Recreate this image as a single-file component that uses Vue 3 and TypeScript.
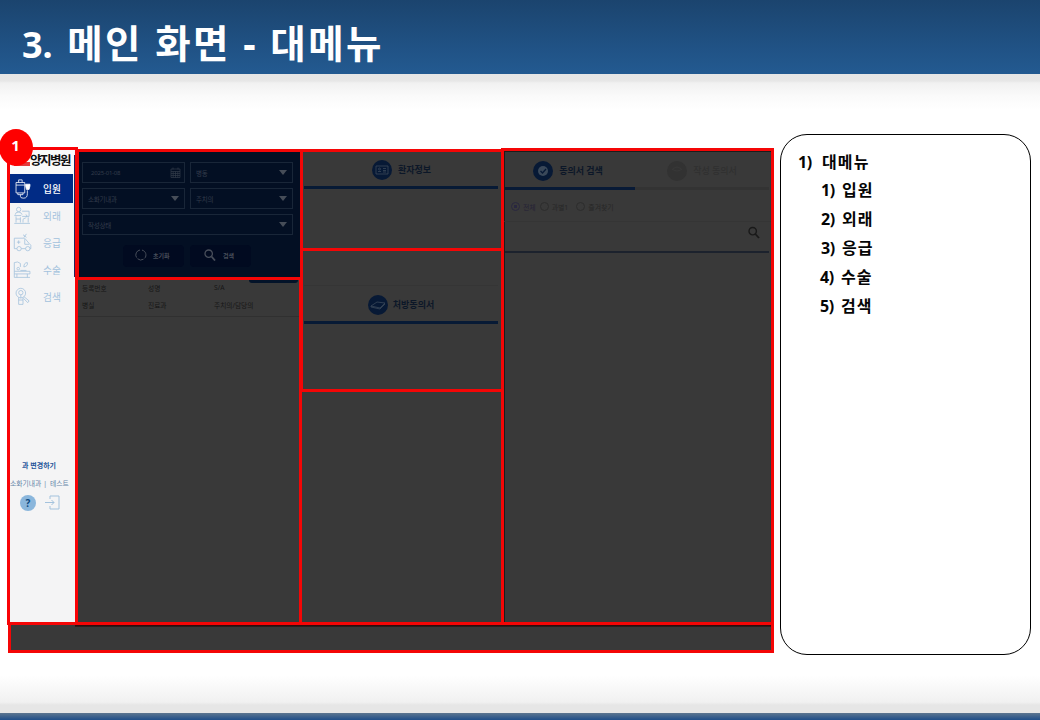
<script setup lang="ts">
interface MenuItem {
  label: string
  icon: string[]
}

const menu: MenuItem[] = [
  {
    label: '입원',
    icon: ['M3 4h10v12H3zM6 4V1h4v3M3 7h10M5 16v2h6v-2M8 18v2q0 2 3 2h1q4 0 4-5v-4', 'M14 6h5v2l-1 4h-3l-1-4z'],
  },
  {
    label: '외래',
    icon: ['M3.500 4a2.500 2.500 0 1 0 5 0a2.500 2.500 0 1 0-5 0M2 10q0-3 4-3q3 0 4 3M1 11h8M3 12v7M17 13v6M3 15h5M8 13v6', 'M10 6h8v6h-8M14 13a1.500 1.500 0 1 0 0-3M11 19v-3q0-2 3-2M1 20h18'],
  },
  {
    label: '응급',
    icon: ['M1 6h12l5 6 2 2v4h-1M1 6v12h3M9 18h5M13 7v6h5', 'M4 18a2.5 2.5 0 1 0 5 0a2.5 2.5 0 1 0-5 0M14 18a2.5 2.5 0 1 0 5 0a2.5 2.5 0 1 0-5 0M4 10.500h4M6 8.500v4M11 2l4 3M15 1l-3 4'],
  },
  {
    label: '수술',
    icon: ['M1 3q4-2 7 1v4M1 3v17M1 13h18v3H1M4 16v4M16 16v4M1 20h18', 'M4 10a1.5 1.5 0 1 0 3 0a1.5 1.5 0 1 0-3 0M8 12h7M12 8q0-5 4-5q1 4-4 5'],
  },
  {
    label: '검색',
    icon: ['M3 7a5.5 5.5 0 1 0 11 0a5.5 5.5 0 1 0-11 0M12 11l6 5-1.500 2-5-5', 'M6 6.500a2.5 2.5 0 1 0 5 0a2.5 2.5 0 1 0-5 0M6 12v8h5v-8M6 15h5M8.500 9v4'],
  },
]

const notes: string[] = ['입원', '외래', '응급', '수술', '검색']
</script>

<template>
  <div class="slide">
    <header class="title"><h1><span>3.</span> 메인 화면 - 대메뉴</h1></header>
    <main class="content">
      <section class="board">
        <span class="badge">1</span>
        <div class="columns">
          <nav class="panel sidebar">
            <div class="logo"><i></i><b>양지병원</b></div>
            <a v-for="(item, i) in menu" :key="item.label" class="item" :class="{ active: i === 0 }">
              <svg viewBox="0 0 22 23"><path v-for="d in item.icon" :key="d" :d="d" /></svg>
              <span>{{ item.label }}</span>
            </a>
            <div class="account">
              <strong>과 변경하기</strong>
              <p><span>소화기내과</span><i>|</i><span>테스트</span></p>
              <div class="tools">
                <span class="help">?</span>
                <svg viewBox="0 0 15 15"><path d="M5 4V1h9v13H5v-3M0 7.5h9M6.5 5L9 7.5 6.5 10" /></svg>
              </div>
            </div>
          </nav>

          <div class="col-a">
            <section class="panel search">
              <div class="fields">
                <div class="field date">
                  <span>2025-01-08</span>
                  <svg class="cal" viewBox="0 0 11 11"><path d="M1 2h9v8.500H1zM1 4.500h9M1 6.500h9M1 8.500h9M3.200 4.500v6M5.500 4.500v6M7.800 4.500v6M3 .5v2M8 .5v2" /></svg>
                </div>
                <div class="field"><span>병동</span><i class="caret"></i></div>
                <div class="field"><span>소화기내과</span><i class="caret"></i></div>
                <div class="field"><span>주치의</span><i class="caret"></i></div>
                <div class="field wide"><span>작성상태</span><i class="caret"></i></div>
              </div>
              <div class="buttons">
                <button>
                  <svg viewBox="0 0 12 12"><path d="M5 1a5 5 0 0 0-3.500 7.500M2.500 9.700a5 5 0 0 0 6 .5M9.700 9.300A5 5 0 0 0 7 1.100" /></svg>초기화
                </button>
                <button>
                  <svg viewBox="0 0 12 12"><path d="M1 4.700a3.700 3.700 0 1 0 7.400 0a3.700 3.700 0 1 0-7.400 0" /><path class="handle" d="M7.500 7.500l3.500 4" /></svg>검색
                </button>
              </div>
            </section>
            <section class="panel list">
              <div class="tab"></div>
              <div class="heads">
                <span>등록번호</span><span>성명</span><span class="sa">S/A</span>
                <span>병실</span><span>진료과</span><span>주치의/담당의</span>
              </div>
            </section>
          </div>

          <div class="col-b">
            <section class="panel info">
              <h2>
                <svg viewBox="0 0 20 20"><circle cx="10" cy="10" r="10" /><path d="M4 6h12v8H4zM6 11.500h3M6.500 9a1 1 0 1 0 2 0a1 1 0 1 0-2 0M11 8.500h3M11 10.500h3M11 12h3" /></svg>환자정보
              </h2>
            </section>
            <section class="panel orders">
              <h2>
                <svg viewBox="0 0 20 20"><circle cx="10" cy="10" r="10" /><path d="M3 11l6-4 8 1-5 5zM3 11v1l9 2 5-5" /></svg>처방동의서
              </h2>
            </section>
            <section class="panel blank"></section>
          </div>

          <section class="panel consent">
            <div class="tabs">
              <h2 class="on">
                <svg viewBox="0 0 20 20"><circle cx="10" cy="10" r="10" /><circle class="ring" cx="10" cy="10" r="5" /><path d="M7.500 10l2 2 3.500-4" /></svg>동의서 검색
              </h2>
              <h2 class="off">
                <svg viewBox="0 0 20 20"><circle cx="10" cy="10" r="10" /><path d="M5 8q5 4 10 0M6 7.500q4-3 8 0" /></svg>작성 동의서
              </h2>
            </div>
            <div class="radios">
              <label class="checked"><i></i>전체</label>
              <label><i></i>과별1</label>
              <label><i></i>즐겨찾기</label>
            </div>
            <div class="query">
              <svg viewBox="0 0 12 12"><path d="M1 4.700a3.700 3.700 0 1 0 7.400 0a3.700 3.700 0 1 0-7.400 0" /><path class="handle" d="M7.300 7.500l3.700 4" /></svg>
            </div>
          </section>
        </div>
        <div class="panel foot"></div>
      </section>

      <aside class="notes">
        <p class="lead"><b>1)</b><span>대메뉴</span></p>
        <ol>
          <li v-for="(note, i) in notes" :key="note"><b>{{ i + 1 }})</b><span>{{ note }}</span></li>
        </ol>
      </aside>
    </main>
    <footer class="base"><div></div></footer>
  </div>
</template>

<style>
body {
  overflow: hidden;
}
</style>

<style scoped>
* {
  box-sizing: border-box;
}
h1, h2, p, ol {
  margin: 0;
  padding: 0;
  list-style: none;
}
i {
  font-style: normal;
}
svg {
  display: block;
  flex: none;
  fill: none;
  stroke: currentColor;
}
.slide {
  width: 1040px;
  height: 720px;
  display: flex;
  flex-direction: column;
  background: #fff;
  font-family: "Noto Sans", "Noto Sans CJK KR", sans-serif;
  white-space: nowrap;
}
.title {
  height: 74px;
  flex: none;
  padding: 14px 0 0 22px;
  background: linear-gradient(#1b446e, #1f4f80 50%, #235a91);
}
h1 {
  color: #fff;
  font-size: 38.5px;
  line-height: 58px;
  font-weight: 700;
  letter-spacing: 2.400px;
}
h1 span {
  margin-right: 2px;
  font-size: 36px;
  letter-spacing: 0;
}
.content {
  height: 601px;
  flex: none;
  display: flex;
  align-items: flex-start;
  background: linear-gradient(#e6e6e6 0, #e7e7e7 7px, #f1f1f1 9px, #fafafa 22px, #fff 36px);
}
.board {
  position: relative;
  width: 767px;
  margin: 73px 0 0 7px;
}
.badge {
  position: absolute;
  z-index: 5;
  left: -8px;
  top: -18px;
  width: 34px;
  height: 37px;
  border-radius: 50%;
  background: #fe0000;
  color: #fff;
  font-size: 15px;
  font-weight: 700;
  line-height: 32px;
  text-align: center;
  padding-right: 1px;
}
.columns {
  display: flex;
  align-items: flex-start;
}
.panel {
  position: relative;
  border: 3px solid #f40606;
  background: #393939;
}
.sidebar {
  z-index: 2;
  width: 71px;
  height: 478px;
  flex: none;
  border-color: #fa0206;
  background: linear-gradient(#23275c, #23275c) right 5px / 1px 122px no-repeat #f4f4f5;
  color: #a3c2dd;
}
.logo {
  width: 64px;
  height: 24px;
  padding-left: 4px;
  display: flex;
  align-items: center;
  background: #fafafa;
  color: #111;
}
.logo i {
  width: 16px;
  height: 4px;
  margin-top: 3px;
  background: #e33a3c;
}
.logo b {
  margin-top: -2px;
  font-size: 12.5px;
  line-height: 18px;
  letter-spacing: -1.5px;
}
.item {
  width: 64px;
  height: 26.900px;
  display: flex;
  align-items: center;
  font-size: 9.700px;
}
.item svg {
  width: 22px;
  height: 20px;
  margin: 0 9px 0 2px;
  stroke-width: 0.9;
}
.item span {
  padding-top: 2px;
  line-height: 16px;
}
.item.active {
  width: 63px;
  height: 29px;
  background: #012b85;
  color: #fff;
  font-weight: 500;
}
.active svg path:last-child {
  fill: #fff;
}
.account {
  margin-top: 150px;
  font-size: 7px;
  line-height: 10px;
}
.account strong {
  display: block;
  padding-left: 12px;
  color: #25559a;
}
.account p {
  display: flex;
  margin-top: 8px;
  gap: 2px;
  color: #6685a8;
  font-size: 6.800px;
}
.account p span:last-child {
  padding-left: 1px;
}
.tools {
  display: flex;
  align-items: center;
  gap: 9px;
  margin: 6px 0 0 10px;
}
.tools svg {
  width: 15px;
  height: 15px;
}
.help {
  width: 16px;
  height: 16px;
  border-radius: 50%;
  background: #8ab6dc;
  color: #0d4880;
  font-size: 10px;
  font-weight: 700;
  line-height: 16px;
  text-align: center;
}
.col-a {
  width: 227px;
  flex: none;
  margin: 2px 0 0 -2px;
}
.search {
  z-index: 3;
  height: 131px;
  padding: 10px 0 0 3px;
  background: #030f23;
  color: #333c4b;
}
.fields {
  display: grid;
  grid-template-columns: 103px 103px;
  gap: 5px;
}
.field {
  height: 21px;
  padding: 0 5px;
  display: flex;
  align-items: center;
  justify-content: space-between;
  border: 1px solid #192638;
  font-size: 6.500px;
  letter-spacing: -0.2px;
}
.date span {
  padding-left: 3px;
  font-size: 6px;
}
.wide {
  grid-column: span 2;
}
.caret {
  border: 4px solid transparent;
  border-top: 5px solid #464d58;
  border-bottom: 0;
}
.cal {
  width: 11px;
  height: 11px;
  margin-right: -2px;
  stroke-width: 0.7;
}
.buttons {
  display: flex;
  gap: 6px;
  margin: 10px 0 0 41px;
}
button {
  width: 61px;
  height: 22px;
  display: flex;
  align-items: center;
  gap: 6px;
  padding: 0 0 2px 12px;
  border: 0;
  border-radius: 4px;
  background: #010a20;
  color: #484e5a;
  font: 700 6px "Noto Sans CJK KR", sans-serif;
}
button svg {
  width: 12px;
  height: 12px;
}
button + button {
  padding-left: 14px;
  gap: 7px;
}
button + button svg {
  stroke-width: 1.300;
}
.handle {
  stroke-width: 1.8;
}
.list {
  z-index: 1;
  width: 227px;
  height: 348px;
  margin: -3px 0 0 -1px;
  overflow: hidden;
}
.tab {
  width: 49px;
  height: 3px;
  margin-left: 171px;
  border-radius: 0 0 12px 12px;
  background: #031329;
}
.heads {
  height: 34px;
  padding-left: 4px;
  display: grid;
  grid-template-columns: 66px 66px 1fr;
  grid-template-rows: 11px 17px;
  align-items: end;
  border-bottom: 1px solid #303030;
  color: #161616;
  font-size: 6.700px;
  line-height: 10px;
}
.sa {
  align-self: start;
}
.col-b {
  width: 204px;
  flex: none;
  margin: 2px 0 0 -3px;
}
.info {
  height: 102px;
}
.info h2,
.orders h2 {
  width: 194px;
  margin-left: 1px;
  border-bottom: 3px solid #071a35;
}
h2 {
  height: 37px;
  padding-top: 2px;
  display: flex;
  align-items: center;
  justify-content: center;
  gap: 6px;
  color: #0c1728;
  font-size: 9px;
  line-height: 14px;
}
h2 svg {
  width: 20px;
  height: 20px;
  color: #3a4859;
  stroke-width: 0.8;
}
h2 svg circle {
  fill: #071935;
  stroke: none;
}
h2 svg .ring {
  fill: #3a4859;
}
h2 .ring + path {
  stroke: #071935;
  stroke-width: 1.3;
}
.info h2 {
  padding-left: 1px;
}
.orders {
  height: 144px;
  margin-top: -3px;
  padding-top: 34px;
}
.orders h2 {
  height: 39px;
  border-top: 1px solid #353535;
  gap: 5px;
}
.blank {
  width: 205px;
  height: 236px;
  margin: -3px 0 0 -1px;
}
.consent {
  z-index: 2;
  width: 273px;
  height: 477px;
  flex: none;
  margin: 1px 0 0 -3px;
  box-shadow: inset 1px 1px #1c1c1c;
}
.tabs {
  display: flex;
  padding-left: 1px;
}
.tabs h2 {
  height: 39px;
  padding-top: 3px;
  border-bottom: 3px solid #081a36;
}
.tabs .on {
  width: 130px;
  padding-right: 4px;
}
.tabs .off {
  width: 134px;
  border-color: #333;
  color: #303030;
  font-weight: 500;
}
.off svg {
  color: #3a3a3a;
}
.off svg circle {
  fill: #323232;
}
.radios {
  display: flex;
  gap: 4px;
  height: 32px;
  padding: 2px 0 0 7px;
  align-items: center;
  border-bottom: 1px solid #353535;
  color: #272727;
  font-size: 6.900px;
}
label {
  display: flex;
  align-items: center;
  gap: 3px;
}
label:last-child {
  margin-left: 4px;
}
label i {
  width: 9px;
  height: 9px;
  border: 1px solid #2c2c2c;
  border-radius: 50%;
}
.checked {
  color: #252136;
}
.checked i {
  border-color: #292740;
  background: radial-gradient(circle, #292740 1.5px, transparent 2px);
}
.query {
  width: 264px;
  height: 31px;
  margin-left: 1px;
  padding: 4px 9px 0 0;
  display: flex;
  justify-content: flex-end;
  border-bottom: 2px solid #1c222d;
  color: #191919;
}
.query svg {
  width: 12px;
  height: 13px;
  stroke-width: 1.400;
}
.foot {
  z-index: 3;
  height: 31px;
  margin: -3px 0 0 1px;
}
.foot::before {
  content: "";
  display: block;
  height: 2px;
  margin-left: 64px;
  background: linear-gradient(#300505, #272727);
}
.notes {
  width: 251px;
  height: 521px;
  margin: 60px 0 0 6px;
  padding: 13px 0 0 17px;
  border: 1px solid #000;
  border-radius: 27px;
  background: #fff;
  color: #050505;
  font-size: 16px;
  font-weight: 700;
  line-height: 29px;
}
.notes p,
.notes li {
  display: flex;
}
.notes ol {
  margin-top: -1px;
}
.notes b {
  width: 21px;
  font-weight: 700;
  letter-spacing: -0.5px;
}
.notes .lead b {
  width: 24px;
}
.notes li {
  padding-left: 23px;
}
.notes li:nth-child(n + 4) {
  padding-left: 22px;
}
.notes span {
  letter-spacing: 1.100px;
}
.base {
  height: 45px;
  flex: none;
  padding-top: 38px;
  background: linear-gradient(#fff, #f1f1f1 27px, #e6e6e6 30px, #e6e6e6);
}
.base div {
  height: 7px;
  background: linear-gradient(#5d7690, #25528a 90%);
}
</style>
